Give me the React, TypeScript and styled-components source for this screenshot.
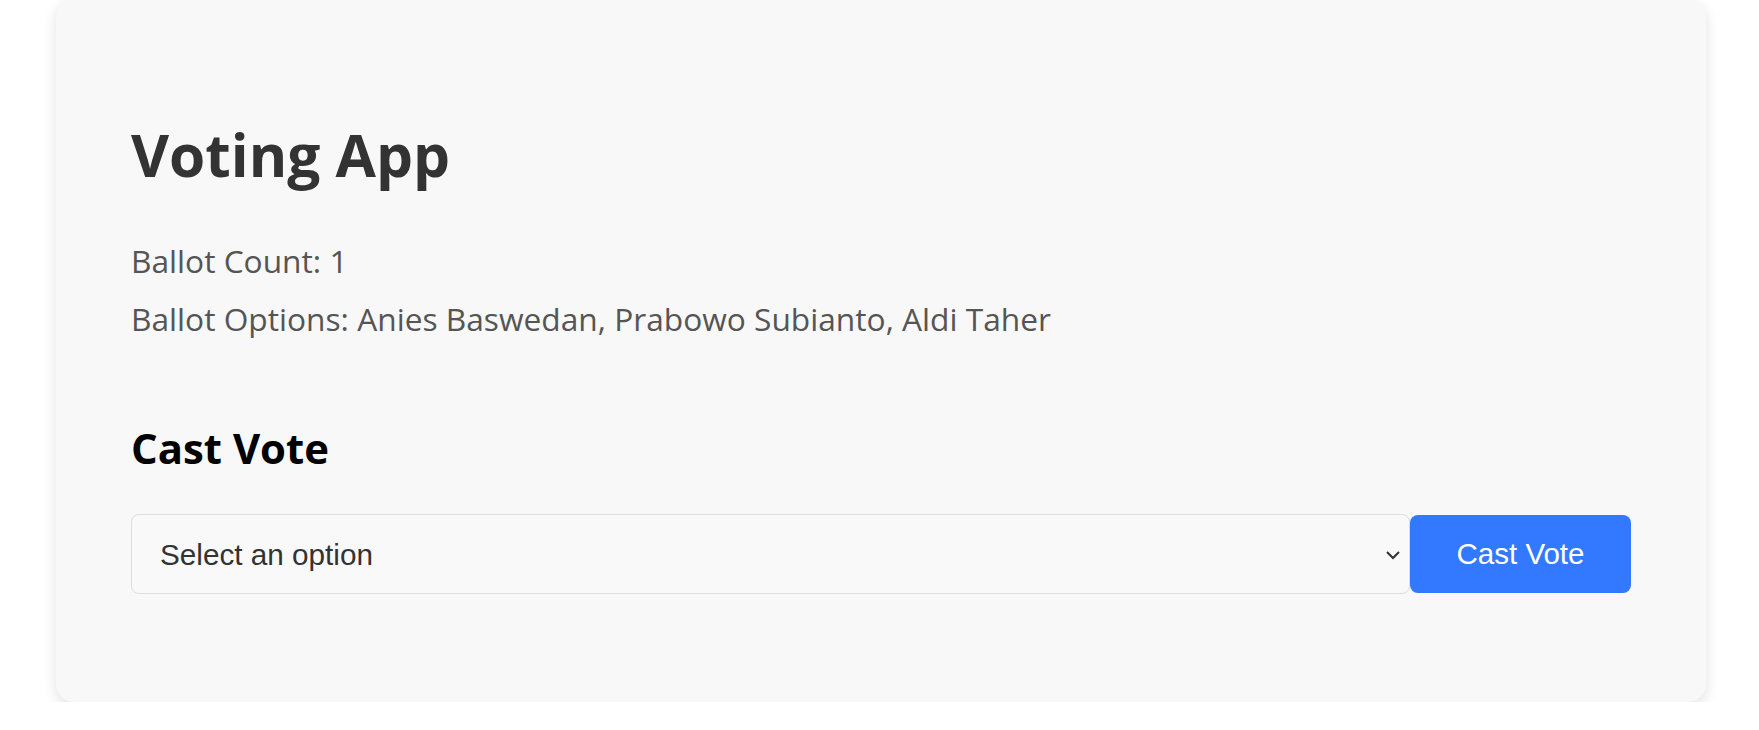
import React, { ChangeEvent, FormEvent, useState } from 'react';
import styled, { createGlobalStyle } from 'styled-components';

const options = ['Anies Baswedan', 'Prabowo Subianto', 'Aldi Taher'];

const App: React.FC = () => {
    const [choice, setChoice] = useState('');
    const [count, setCount] = useState(1);

    const handleChange = (e: ChangeEvent<HTMLSelectElement>) => {
        setChoice(e.target.value);
    }

    const onSubmit = (e: FormEvent<HTMLFormElement>) => {
        e.preventDefault();
        if (choice) setCount(prev => prev + 1);
    }

    return (
        <>
            <GlobalStyle />
            <Card>
                <Title>Voting App</Title>
                <Info>Ballot Count: {count}</Info>
                <Info>Ballot Options: {options.join(', ')}</Info>
                <Subtitle>Cast Vote</Subtitle>
                <VoteForm onSubmit={onSubmit}>
                    <SelectWrap>
                        <Select value={choice} onChange={handleChange}>
                            <option value="">Select an option</option>
                            {options.map(o => (
                                <option key={o} value={o}>{o}</option>
                            ))}
                        </Select>
                        <Chevron width="16" height="10" viewBox="0 0 16 10">
                            <path d="M2 2 L8 8 L14 2" fill="none" stroke="#333" strokeWidth="2" />
                        </Chevron>
                    </SelectWrap>
                    <Submit type="submit">Cast Vote</Submit>
                </VoteForm>
            </Card>
        </>
    )
}

const GlobalStyle = createGlobalStyle`
    body {
        margin: 0;
        background: #fff;
        font-family: "Open Sans", "Noto Sans", sans-serif;
    }
`

const Card = styled.div`
    box-sizing: border-box;
    width: 1650px;
    margin-left: 56px;
    padding: 124px 75px 108px 75px;
    background: #f8f8f8;
    border-radius: 18px;
    box-shadow: 0 4px 14px rgba(0, 0, 0, 0.12);
`

const Title = styled.h1`
    margin: 0 0 48px;
    font-size: 58.6px;
    line-height: 60px;
    font-weight: 700;
    color: #333;
`

const Info = styled.p`
    margin: 0;
    font-size: 31.7px;
    line-height: 58px;
    color: #555;
`

const Subtitle = styled.h2`
    margin: 75px 0 41px;
    font-size: 41.9px;
    line-height: 50px;
    font-weight: 700;
    color: #000;
`

const VoteForm = styled.form`
    display: flex;
    align-items: center;
`

const SelectWrap = styled.div`
    position: relative;
    flex: 1;
`

const Select = styled.select`
    box-sizing: border-box;
    width: 100%;
    height: 80px;
    padding: 0 50px 0 28px;
    appearance: none;
    background: #f9f9f9;
    border: 1px solid #ddd;
    border-radius: 8px;
    font-family: "Liberation Sans", Arial, sans-serif;
    font-size: 29.7px;
    color: #333;
    outline: none;
`

const Chevron = styled.svg`
    position: absolute;
    right: 9px;
    top: 36px;
    pointer-events: none;
`

const Submit = styled.button`
    width: 221px;
    height: 78px;
    border: none;
    border-radius: 8px;
    background: #3379ff;
    color: #fff;
    font-family: "Liberation Sans", Arial, sans-serif;
    font-size: 29.5px;
    cursor: pointer;
`

export default App;
